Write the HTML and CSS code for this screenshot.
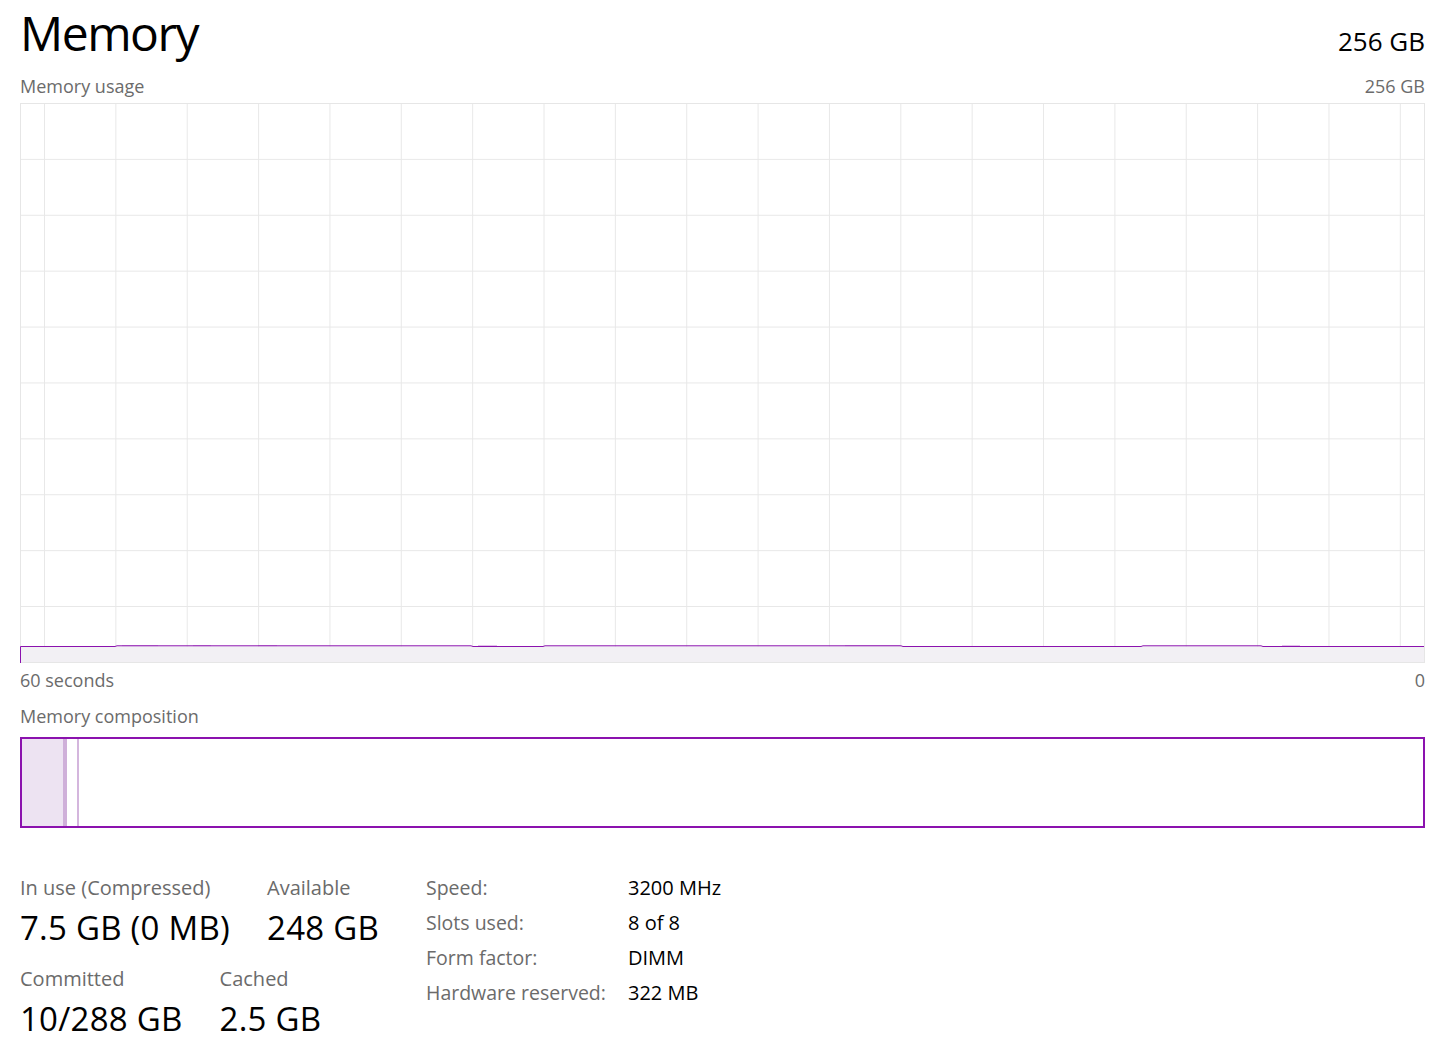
FILE: index.html
```html
<!DOCTYPE html>
<html lang="en">
<head>
<meta charset="utf-8">
<title>Memory</title>
<link rel="stylesheet" href="styles.css">
</head>
<body>
<main class="page">
  <header class="head">
    <h1 class="title">Memory</h1>
    <div class="total">256 GB</div>
  </header>
  <div class="axis-row top-row">
    <span>Memory usage</span>
    <span>256 GB</span>
  </div>
  <div class="graph">
    <svg class="plot" viewBox="0 0 1403 558" width="1403" height="558" aria-hidden="true">
      <path class="fill" d="M0 542.5 H1403 V558 H0 Z"/>
      <path class="bump" d="M101 541.6 H137 M172 541.6 H190 M237 541.6 H256 M457 541.6 H476 M824 541.6 H879 M1261 541.6 H1279"/>
      <path class="line" d="M-0.5 559 V542.5 H94 L96 541.8 H450 L452 542.5 H522 L524 541.8 H880 L882 542.5 H1120 L1122 541.8 H1240 L1242 542.5 H1403"/>
    </svg>
  </div>
  <div class="axis-row bottom-row">
    <span>60 seconds</span>
    <span>0</span>
  </div>
  <div class="section-label">Memory composition</div>
  <div class="composition">
    <div class="seg inuse" style="width:41px"></div>
    <div class="seg modified" style="width:4px"></div>
    <div class="seg standby" style="width:12px"></div>
  </div>
  <section class="stats">
    <div class="stat-block">
      <div class="stat-row">
        <div class="stat"><div class="stat-label">In use (Compressed)</div><div class="stat-value">7.5 GB (0 MB)</div></div>
        <div class="stat"><div class="stat-label">Available</div><div class="stat-value">248 GB</div></div>
      </div>
      <div class="stat-row">
        <div class="stat"><div class="stat-label">Committed</div><div class="stat-value">10/288 GB</div></div>
        <div class="stat"><div class="stat-label">Cached</div><div class="stat-value">2.5 GB</div></div>
      </div>
      <div class="stat-row">
        <div class="stat"><div class="stat-label">Paged pool</div><div class="stat-value">1.1 GB</div></div>
        <div class="stat"><div class="stat-label">Non-paged pool</div><div class="stat-value">1.0 GB</div></div>
      </div>
    </div>
    <dl class="specs">
      <dt>Speed:</dt><dd>3200 MHz</dd>
      <dt>Slots used:</dt><dd>8 of 8</dd>
      <dt>Form factor:</dt><dd>DIMM</dd>
      <dt>Hardware reserved:</dt><dd>322 MB</dd>
    </dl>
  </section>
</main>
</body>
</html>
```

FILE: styles.css
```css
html, body {
  margin: 0;
  padding: 0;
  background: #ffffff;
  overflow: hidden;
}

body {
  font-family: "Open Sans", "Noto Sans", "Liberation Sans", sans-serif;
  color: #000000;
}

.page {
  width: 1405px;
  padding: 0 18px 0 20px;
}

.head {
  display: flex;
  justify-content: space-between;
  align-items: baseline;
  padding-top: 3px;
  height: 60px;
}

.title {
  margin: 0;
  font-size: 48px;
  font-weight: 400;
  line-height: 60px;
  letter-spacing: -1.5px;
}

.total {
  font-size: 26px;
  line-height: 34px;
}

.axis-row {
  display: flex;
  justify-content: space-between;
  font-size: 18px;
  line-height: 24px;
  color: #6b6b6b;
}

.top-row {
  margin-top: 11px;
}

.graph {
  box-sizing: border-box;
  width: 1405px;
  height: 560px;
  margin-top: 5px;
  border: 1px solid #e6e6e6;
  background-color: #ffffff;
  background-image:
    linear-gradient(to right, #e8e8e8 1px, transparent 1px),
    linear-gradient(to bottom, #e8e8e8 1px, transparent 1px);
  background-size: 71.37px 100%, 100% 55.9px;
  background-position: 23px 0, 0 54.9px;
}

.plot {
  display: block;
  overflow: visible;
}

.fill {
  fill: #f2f0f4;
}

.bump {
  stroke: #c98fd9;
  stroke-width: 1;
  fill: none;
  opacity: 0.6;
}

.line {
  stroke: #8b12ae;
  stroke-width: 1;
  fill: none;
}

.bottom-row {
  margin-top: 5px;
}

.section-label {
  margin-top: 12px;
  font-size: 18px;
  line-height: 24px;
  color: #6b6b6b;
}

.composition {
  box-sizing: border-box;
  display: flex;
  width: 1405px;
  height: 91px;
  margin-top: 9px;
  border: 2px solid #8b12ae;
}

.seg {
  height: 100%;
  box-sizing: border-box;
}

.inuse {
  background: #ede3f2;
}

.modified {
  background: #cfb0d9;
}

.standby {
  border-right: 2px solid #d4b6dd;
}

.stats {
  display: grid;
  grid-template-columns: 406px auto;
  margin-top: 46px;
}

.stat-block {
  display: flex;
  flex-direction: column;
  gap: 15px;
}

.stat-row {
  display: flex;
  gap: 37px;
}

.stat-label {
  font-size: 20px;
  line-height: 28px;
  color: #6b6b6b;
}

.stat-value {
  margin-top: 4px;
  font-size: 33px;
  line-height: 44px;
  letter-spacing: 0.25px;
  color: #000000;
}

.specs {
  display: grid;
  grid-template-columns: 202px auto;
  grid-auto-rows: 35px;
  margin: -4px 0 0 0;
  font-size: 20px;
  line-height: 35px;
  align-content: start;
}

.specs dt {
  color: #6b6b6b;
  font-size: 19.5px;
}

.specs dd {
  margin: 0;
  color: #000000;
}
```
